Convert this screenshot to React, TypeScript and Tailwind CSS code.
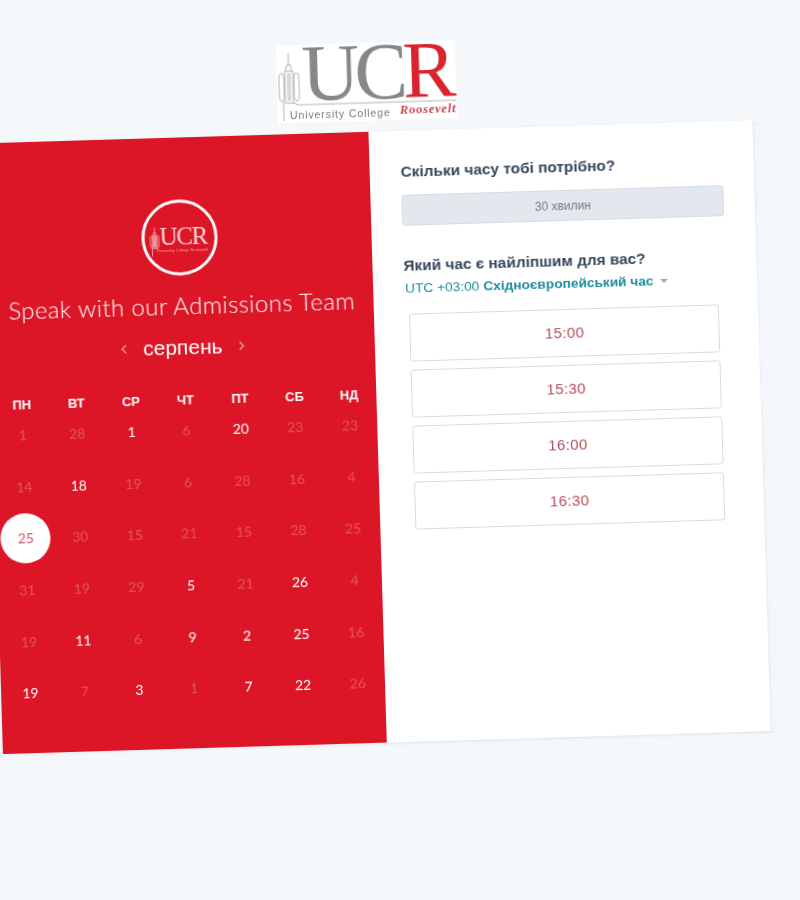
import { ChevronLeft, ChevronRight } from "lucide-react";

const days = ["ПН", "ВТ", "СР", "ЧТ", "ПТ", "СБ", "НД"];

// value, on = white number in the month
const cells: [number, boolean][] = [
  [1, false], [28, false], [1, true], [6, false], [20, true], [23, false], [23, false],
  [14, false], [18, true], [19, false], [6, false], [28, false], [16, false], [4, false],
  [25, false], [30, false], [15, false], [21, false], [15, false], [28, false], [25, false],
  [31, false], [19, false], [29, false], [5, true], [21, false], [26, true], [4, false],
  [19, false], [11, true], [6, false], [9, true], [2, true], [25, true], [16, false],
  [19, true], [7, false], [3, true], [1, false], [7, true], [22, true], [26, false],
];

const slots = ["15:00", "15:30", "16:00", "16:30"];

const Tower = ({ stroke, width = 0.9 }: { stroke: string; width?: number }) => (
  <g fill="none" stroke={stroke} strokeWidth={width}>
    <path d="M12 8V20M9 26L10 20H14L15 26" />
    <path d="M8 26H16V58H8ZM11 28V56M13 28V56" />
    <path d="M2 32Q2 28 5 28Q7 28 7 32V50Q7 56 5 56Q2 56 2 50Z" />
    <path d="M17 32Q17 28 19.500 28Q22 28 22 32V50Q22 56 19.500 56Q17 56 17 50Z" />
    <path d="M6 56V76M16 58L21 60" />
  </g>
);

const Logo = () => (
  <svg width="179" height="78" viewBox="0 0 179 78" className="bg-white overflow-visible">
    <Tower stroke="#a9a9ab" />
    <text x="25" y="56" fontFamily="Liberation Serif" fontSize="80" fill="#87878a" letterSpacing="-5">UC</text>
    <text x="126" y="56" fontFamily="Liberation Serif" fontSize="80" fill="#d9232e">R</text>
    <path d="M21 60H179" stroke="#b5b5b7" strokeWidth="1" />
    <text x="12" y="74" fontFamily="Liberation Sans" fontSize="10.5" fill="#77777a" letterSpacing="0.9">University College</text>
    <text x="122" y="72" fontFamily="Liberation Serif" fontSize="12.5" fontWeight="700" fontStyle="italic" fill="#c9434c" letterSpacing="0.8">Roosevelt</text>
  </svg>
);

const RoundLogo = () => (
  <div className="w-[76px] h-[76px] rounded-full border-[3px] border-white">
    <svg width="70" height="70" viewBox="0 0 70 70">
      <g transform="translate(5 21) scale(0.42)">
        <Tower stroke="#f5b5bb" width={2} />
      </g>
      <text x="15" y="42" fontFamily="Liberation Serif" fontSize="25" fill="#fbd5d8" letterSpacing="-1.4">UCR</text>
      <text x="12" y="49" fontFamily="Liberation Sans" fontSize="3.6" fill="#f3a6ad" letterSpacing="0.2">University College Roosevelt</text>
    </svg>
  </div>
);

export default function App() {
  return (
    <div className="relative w-[800px] h-[900px] overflow-hidden bg-[#f5f8fb] pt-[123px]">
      <div className="h-[610px] ml-[740px] bg-[#f3f6fb] border-y border-[#eef1f6]" />

      <div className="absolute inset-0 rotate-[-1.72deg] origin-center flex flex-col items-start blur-[0.2px]">
        <div className="mt-[42px] ml-[288px]">
          <Logo />
        </div>

        <div className="mt-[11px] ml-[-6px] flex w-[768px] h-[611px] shadow-[0_1px_3px_rgba(45,62,80,0.12)]">
          <div className="w-[384px] bg-[#dc1626] flex flex-col items-center pt-[62px] font-['Lato',sans-serif] text-white">
            <RoundLogo />
            <h1 className="mt-[13px] h-[34px] leading-[34px] text-[24px] font-light tracking-[0.38px] whitespace-nowrap">
              Speak with our Admissions Team
            </h1>
            <div className="mt-[8px] h-[34px] flex items-center gap-[11px] font-['Liberation_Sans',sans-serif] text-[21px]">
              <ChevronLeft size={14} strokeWidth={3} className="text-white/50" />
              <span className="w-[82px] text-center">серпень</span>
              <ChevronRight size={14} strokeWidth={3} className="text-white/50" />
            </div>
            <div className="mt-[26px] w-full pl-[2px] grid grid-cols-7 h-5 items-center text-center font-['Liberation_Sans',sans-serif] text-[13px] font-bold">
              {days.map((d) => (
                <div key={d}>{d}</div>
              ))}
            </div>
            <div className="mt-[-6px] w-full pl-[2px] grid grid-cols-7 auto-rows-[51.6px] text-center text-[14px]">
              {cells.map(([n, on], i) =>
                i === 14 ? (
                  <div key={i} className="flex items-center justify-center">
                    <span className="w-[50px] h-[50px] rounded-full bg-white flex items-center justify-center text-[#c9566a]">
                      {n}
                    </span>
                  </div>
                ) : (
                  <div
                    key={i}
                    className={on ? "flex items-center justify-center text-white" : "flex items-center justify-center text-white/25"}
                  >
                    {n}
                  </div>
                ),
              )}
            </div>
          </div>

          <div className="w-[384px] bg-white pl-[31px] pr-[31px] pt-[31px] font-['Liberation_Sans',sans-serif]">
            <h2 className="h-5 leading-5 text-[15.4px] font-bold text-[#33475b]">Скільки часу тобі потрібно?</h2>
            <div className="mt-[13px] h-[31px] flex items-center justify-center rounded-[3px] bg-[#e3e8ef] border border-[#d5dce6] text-[12px] text-[#6f7d8c]">
              30 хвилин
            </div>
            <h2 className="mt-[30px] h-5 leading-5 text-[15.4px] font-bold text-[#33475b]">Який час є найліпшим для вас?</h2>
            <div className="mt-[3px] ml-[1px] h-5 flex items-center text-[13.7px] text-[#1f8c9f] whitespace-nowrap">
              <span>UTC +03:00</span>
              <span className="ml-1 font-bold">Східноєвропейський час</span>
              <span className="ml-[7px] w-0 h-0 border-x-[4px] border-x-transparent border-t-[4px] border-t-[#9aa9bb]" />
            </div>
            <div className="mt-[15px] ml-[4px] w-[310px] flex flex-col gap-2">
              {slots.map((s) => (
                <div
                  key={s}
                  className="h-[48px] flex items-center justify-center rounded-[3px] border border-[#d6dbe1] text-[15px] text-[#b84a58] tracking-[0.4px]"
                >
                  {s}
                </div>
              ))}
            </div>
          </div>
        </div>
      </div>
    </div>
  );
}
